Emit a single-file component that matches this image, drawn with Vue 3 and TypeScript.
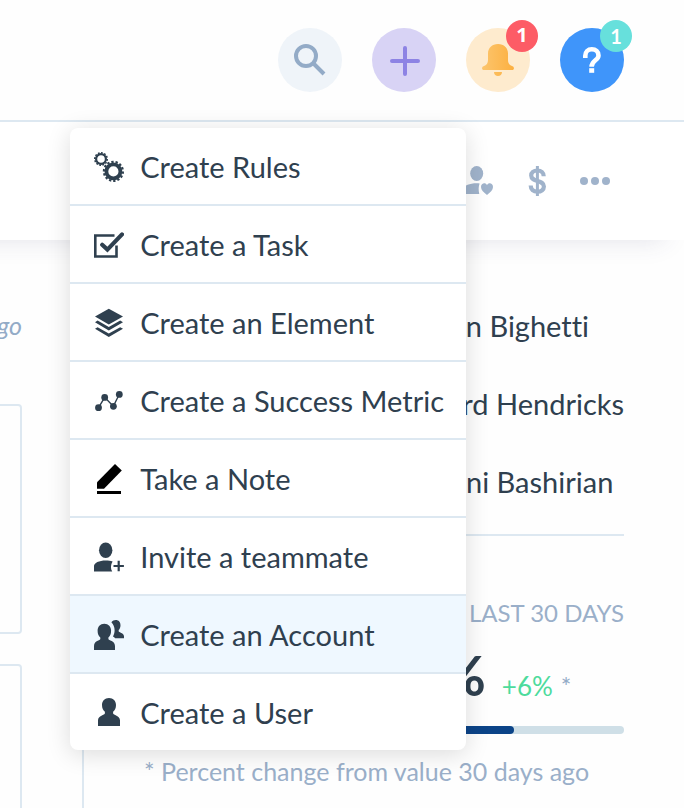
<script setup lang="ts">
import { ref } from 'vue'

type IconName = 'rules' | 'task' | 'element' | 'metric' | 'note' | 'invite' | 'account' | 'user'

interface MenuEntry {
  icon: IconName
  label: string
}

const entries: MenuEntry[] = [
  { icon: 'rules', label: 'Create Rules' },
  { icon: 'task', label: 'Create a Task' },
  { icon: 'element', label: 'Create an Element' },
  { icon: 'metric', label: 'Create a Success Metric' },
  { icon: 'note', label: 'Take a Note' },
  { icon: 'invite', label: 'Invite a teammate' },
  { icon: 'account', label: 'Create an Account' },
  { icon: 'user', label: 'Create a User' },
]

const active = ref<IconName>('account')
const menuOpen = ref(true)
const people: string[] = ['Nelson Bighetti', 'Richard Hendricks', 'Jovanni Bashirian']
const score = 77
</script>

<template>
  <div class="page">
    <header class="topbar">
      <button class="round search" type="button" aria-label="Search">
        <svg viewBox="0 0 64 64" fill="none" stroke="currentColor" stroke-width="4">
          <circle cx="28" cy="28" r="10" />
          <path d="M35 35l11 11" />
        </svg>
      </button>

      <div class="anchor">
        <button
          class="round add"
          type="button"
          aria-label="Create"
          :aria-expanded="menuOpen"
          @click="menuOpen = !menuOpen"
        >
          <svg viewBox="0 0 64 64" fill="none" stroke="currentColor" stroke-width="4" stroke-linecap="round">
            <path d="M33 20v26M20 33h26" />
          </svg>
        </button>

        <nav v-if="menuOpen" class="menu" aria-label="Create">
          <button
            v-for="entry in entries"
            :key="entry.icon"
            type="button"
            class="item"
            :class="{ active: entry.icon === active }"
            @mouseenter="active = entry.icon"
          >
            <svg class="icon" viewBox="0 0 30 30" fill="currentColor" aria-hidden="true">
              <g v-if="entry.icon === 'rules'" fill="none" stroke="currentColor">
                <circle cx="7" cy="7" r="4.9" stroke-width="2.2" />
                <circle cx="7" cy="7" r="6.2" stroke-width="1.6" pathLength="24" stroke-dasharray="1.100 0.900" />
                <circle cx="19.4" cy="19.4" r="7" stroke-width="3.800" />
                <circle cx="19.4" cy="19.4" r="9.5" stroke-width="2.2" pathLength="28" stroke-dasharray="1.100 0.900" />
              </g>
              <g v-else-if="entry.icon === 'task'" fill="none" stroke="currentColor">
                <path d="M20.5 5.5H1.3v21h21.2V15.5" stroke-width="2.6" />
                <path d="M8.2 14.8l5.2 4.8L28 4.4" stroke-width="4.2" stroke-linecap="round" />
              </g>
              <g v-else-if="entry.icon === 'element'">
                <path d="M14.8.8L29 8.6l-14.2 8L1 8.6z" />
                <path d="M1 14.2l2.6-1.6 11.2 6.3 11.4-6.3 2.8 1.6-14.2 8.2z" />
                <path d="M1 20.8l2.6-1.6 11.2 6.3 11.4-6.3 2.8 1.6L14.8 29z" />
              </g>
              <g v-else-if="entry.icon === 'metric'">
                <path d="M4.5 21.7l6.2-10.4 8.6 9 6-12" fill="none" stroke="currentColor" stroke-width="1.4" />
                <circle cx="4.5" cy="21.7" r="3.4" />
                <circle cx="10.7" cy="11.4" r="3.4" />
                <circle cx="19.4" cy="20.3" r="3.4" />
                <circle cx="25.3" cy="8.4" r="3.4" />
              </g>
              <g v-else-if="entry.icon === 'note'" fill="#000">
                <path d="M3 24.7v-6.5L21 0l6.8 6.4L10 24.7z" />
                <path d="M3 27h24v3H3z" />
              </g>
              <g v-else-if="entry.icon === 'invite'">
                <ellipse cx="11.7" cy="8.3" rx="6.7" ry="7.8" />
                <path d="M0 29.4V24c0-3.2 5-5.6 11.8-5.6 2.6 0 4.8.3 6.8 1-2 3.300-2.200 7-.4 10z" />
                <path d="M24.700 18.800v10.400M19.500 24h10.400" fill="none" stroke="currentColor" stroke-width="2.200" />
              </g>
              <g v-else-if="entry.icon === 'account'">
                <path d="M10.300 3.800c4.200 0 6.800 2.900 6.800 6.900 0 3.200-1 5.100-2.700 6.700v1.700c0 1.600 6.600 1.600 6.600 6.900v4H0v-4c0-5.300 6.300-5.300 6.300-6.900v-1.700c-1.700-1.600-2.700-3.500-2.700-6.700 0-4 2.500-6.900 6.700-6.900z" />
                <path d="M17.400 2.200C18.500.8 20 .1 21.800.1c3 0 4.700 2.200 4.700 5.100 0 2.300-.7 3.700-1.800 4.900v1.100c0 1.300 5.300 1.700 5.300 5v2.100h-8.800c-.6-.8-1.400-1.400-2.200-1.900 1-1.800 1.600-3.800 1.600-6.100 0-3.200-1.100-6-3.200-8.100z" />
              </g>
              <g v-else>
                <path d="M15 0c4.300 0 7 2.900 7 7 0 3.200-1.100 5.200-2.900 6.800v1.400c0 2.100 6.900 2 6.900 7.300V28H4v-5.500c0-5.300 6.900-5.200 6.900-7.300v-1.400C9.100 12.200 8 10.200 8 7c0-4.100 2.700-7 7-7z" />
              </g>
            </svg>
            <span>{{ entry.label }}</span>
          </button>
        </nav>
      </div>

      <button class="round alerts" type="button" aria-label="Notifications">
        <svg viewBox="0 0 64 64" fill="url(#bell-fill)">
          <defs>
            <linearGradient id="bell-fill">
              <stop offset="0" stop-color="#fcc56d" />
              <stop offset="1" stop-color="#fcb040" />
            </linearGradient>
          </defs>
          <path d="M32 16c6 0 10 4 10 9.500v6.500c0 3 1.300 5.300 4.500 6.200 2 .7 2 3.800-.5 3.800H18c-2.500 0-2.500-3.100-.5-3.800 3.200-.9 4.500-3.200 4.500-6.200v-6.500C22 20 26 16 32 16zM28 44h8c0 2.400-1.700 4-4 4s-4-1.600-4-4z" />
        </svg>
        <span class="badge red">1</span>
      </button>

      <button class="round help" type="button" aria-label="Help">
        <svg viewBox="0 0 64 64" fill="none" stroke="currentColor" stroke-width="4.600">
          <path d="M25.300 30v-2.200c0-4 2.600-6.500 6.500-6.500s6.700 2.400 6.700 6.100c0 5.200-6.900 4.700-6.900 11.400" />
          <path d="M29.200 42.500h5" />
        </svg>
        <span class="badge teal">1</span>
      </button>
    </header>

    <div class="toolbar">
      <button class="tool" type="button" aria-label="Favorite contact">
        <svg viewBox="0 0 30 30" fill="currentColor">
          <ellipse cx="12.700" cy="7.500" rx="6.500" ry="7.500" />
          <path d="M0 28v-5c0-3.500 5.500-5.700 12.700-5.700 1 0 2 0 2.900.2-1.200 3.500-1.200 6.500-.3 10.500z" />
          <path d="M23 29c-3.200-2.500-6-5-6-8 0-4 4.600-4.900 6-1.800 1.400-3.100 6-2.200 6 1.800 0 3-2.800 5.500-6 8z" />
        </svg>
      </button>
      <button class="tool" type="button" aria-label="Billing">
        <svg viewBox="0 0 30 30" fill="none" stroke="currentColor">
          <path d="M21.700 10.200c0-3.600-2.500-5.700-6.300-5.700s-6.200 1.900-6.200 5c0 7 12.700 4 12.700 11 0 3.200-2.600 5.200-6.500 5.200s-6.700-2.200-6.700-6.200" stroke-width="4.200" />
          <path d="M15.400 0v30" stroke-width="3" />
        </svg>
      </button>
      <button class="tool" type="button" aria-label="More">
        <svg viewBox="0 0 30 30" fill="currentColor">
          <circle cx="4" cy="15" r="4" />
          <circle cx="15" cy="15" r="4" />
          <circle cx="26" cy="15" r="4" />
        </svg>
      </button>
    </div>

    <main class="content">
      <section class="feed">
        <p class="ago">ago</p>
        <div class="card"></div>
        <div class="card"></div>
      </section>

      <aside class="side">
        <ul class="people">
          <li v-for="person in people" :key="person">{{ person }}</li>
        </ul>
        <p class="period">LAST 30 DAYS</p>
        <div class="stat">
          <strong>{{ score }}%</strong>
          <span class="change">+6%</span>
          <span class="star">*</span>
        </div>
        <div class="track" role="progressbar" :aria-valuenow="score">
          <div class="fill" :style="{ width: score + '%' }"></div>
        </div>
        <p class="footnote">* Percent change from value 30 days ago</p>
      </aside>
    </main>
  </div>
</template>

<style>
body {
  margin: 0;
  background: #fefefe;
}
</style>

<style scoped>
.page {
  display: flex;
  flex-direction: column;
  height: 100vh;
  overflow: hidden;
  color: #2f404f;
  font-family: Lato, "Liberation Sans", sans-serif;
  font-size: 29px;
  font-variant-ligatures: none;
  line-height: 34px;
}
button {
  padding: 0;
  border: 0;
  background: none;
  color: inherit;
  font: inherit;
  cursor: pointer;
}
svg {
  display: block;
}
p,
ul {
  margin: 0;
  padding: 0;
}
.topbar {
  display: flex;
  flex-shrink: 0;
  justify-content: flex-end;
  gap: 30px;
  padding: 28px 60px;
  border-bottom: 2px solid #dde8f1;
}
.anchor {
  position: relative;
}
.round {
  position: relative;
  display: block;
  width: 64px;
  height: 64px;
  border-radius: 50%;
}
.search {
  background: #eff4f9;
  color: #93abc7;
}
.add {
  background: #d8d3f5;
  color: #8d83e4;
}
.alerts {
  background: #feebce;
}
.help {
  background: #3f95fa;
  color: #fff;
}
.badge {
  position: absolute;
  top: -8px;
  right: -8px;
  width: 32px;
  height: 32px;
  border-radius: 50%;
  color: #fff;
  font-size: 20px;
  font-weight: 700;
  line-height: 32px;
  text-align: center;
}
.red {
  background: #fd5c66;
  font-family: "Open Sans", sans-serif;
  line-height: 30px;
}
.teal {
  background: #67e0dc;
}
.menu {
  position: absolute;
  z-index: 2;
  top: 100px;
  right: -30px;
  display: flex;
  flex-direction: column;
  overflow: hidden;
  border-radius: 8px;
  background: #fff;
  box-shadow: 0 4px 24px rgba(0, 0, 0, 0.14);
}
.item {
  display: flex;
  align-items: center;
  gap: 16px;
  padding: 22px 22px 20px 24px;
  white-space: nowrap;
  text-align: left;
}
.item + .item {
  border-top: 2px solid #dde8f1;
}
.item.active {
  background: #eff8ff;
}
.icon {
  width: 30px;
  height: 30px;
}
.toolbar {
  display: flex;
  flex-shrink: 0;
  justify-content: flex-end;
  gap: 28px;
  margin-left: -60px;
  padding: 44px 74px;
  background: #fff;
  box-shadow: 0 20px 24px -20px rgba(60, 60, 110, 0.15);
  color: #a0b3cb;
}
.tool {
  width: 30px;
  height: 30px;
}
.content {
  display: grid;
  flex: 1;
  grid-template-columns: 22px minmax(0, 1fr);
  gap: 60px;
  min-height: 0;
}
.feed {
  display: flex;
  flex-direction: column;
  gap: 30px;
  padding-top: 68px;
}
.ago {
  align-self: flex-end;
  height: 66px;
  color: #93abc7;
  font-size: 25px;
  font-style: italic;
}
.card {
  flex-shrink: 0;
  height: 226px;
  border: solid #dde8f1;
  border-width: 2px 2px 2px 0;
  border-radius: 0 4px 4px 0;
}
.side {
  padding: 47px 60px 0;
  border-left: 2px solid #dde8f1;
}
.people {
  padding-bottom: 13px;
  border-bottom: 2px solid #dde8f1;
  list-style: none;
}
.people li {
  padding: 22px 0 22px 249px;
  white-space: nowrap;
}
.period {
  padding-top: 60px;
  color: #9aafc9;
  font-size: 24px;
  text-align: right;
}
.stat {
  display: flex;
  align-items: baseline;
  padding: 13px 0 0 231px;
  line-height: 64px;
}
.stat strong {
  font-size: 56px;
}
.change {
  margin-left: 16px;
  color: #4ddb9c;
  font-size: 26px;
}
.star {
  margin-left: 8px;
  color: #93abc7;
  font-size: 25px;
}
.track {
  height: 8px;
  margin-top: 8px;
  border-radius: 4px;
  background: #cfdfe7;
}
.fill {
  height: 100%;
  border-radius: 4px;
  background: #0c4488;
}
.footnote {
  padding-top: 20px;
  color: #9aafc9;
  font-size: 25px;
  white-space: nowrap;
}
</style>
